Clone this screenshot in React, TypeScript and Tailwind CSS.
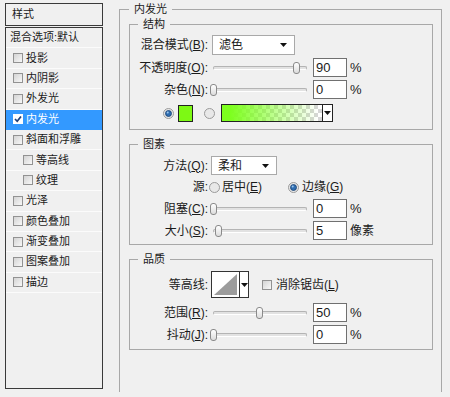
import React from "react";

type Effect = { label: string; checked?: boolean; active?: boolean; sub?: boolean };

const effects: Effect[] = [
  { label: "投影" },
  { label: "内阴影" },
  { label: "外发光" },
  { label: "内发光", checked: true, active: true },
  { label: "斜面和浮雕" },
  { label: "等高线", sub: true },
  { label: "纹理", sub: true },
  { label: "光泽" },
  { label: "颜色叠加" },
  { label: "渐变叠加" },
  { label: "图案叠加" },
  { label: "描边" },
];

function Check({ checked = false }: { checked?: boolean }) {
  if (checked) {
    return (
      <span className="flex h-[10px] w-[10px] shrink-0 items-center justify-center border border-white bg-white">
        <svg width="8" height="8" viewBox="0 0 8 8">
          <path d="M1 4 L3.2 6.3 L7 1.4" fill="none" stroke="#1f3f78" strokeWidth="1.7" />
        </svg>
      </span>
    );
  }
  return <span className="block h-[10px] w-[10px] shrink-0 border border-[#929292] bg-gradient-to-br from-[#d4d4d4] to-[#f8f8f8]" />;
}

function Radio({ on = false }: { on?: boolean }) {
  return (
    <svg width="11" height="11" viewBox="0 0 11 11" className="shrink-0">
      <circle cx="5.5" cy="5.5" r="5" fill="#e8e8e8" stroke="#9a9a9a" />
      {on && (
        <>
          <circle cx="5.5" cy="5.5" r="3" fill="#2f6db0" stroke="#173f6e" strokeWidth="0.8" />
          <circle cx="4.7" cy="4.6" r="1" fill="#9cc7ef" />
        </>
      )}
    </svg>
  );
}

function Arrow() {
  return (
    <svg width="7" height="4" viewBox="0 0 7 4" className="shrink-0">
      <path d="M0 0H7L3.5 4Z" fill="#111" />
    </svg>
  );
}

function Select({ value, className }: { value: string; className: string }) {
  return (
    <div className={`flex items-center justify-between border border-[#a9a9a9] bg-white pl-[6px] pr-[7px] ${className}`}>
      <span>{value}</span>
      <Arrow />
    </div>
  );
}

function Slider({ pos }: { pos: number }) {
  return (
    <div className="relative ml-[2px] h-[14px] w-[97px]">
      <div className="absolute left-[3px] right-0 top-[5px] h-[4px] rounded-[2px] border border-[#b4b4b4] border-b-white bg-[#e2e2e2]" />
      <div
        className="absolute top-[1px] h-[12px] w-[7px] rounded-[3px] border border-[#8a8a8a] bg-gradient-to-b from-white to-[#dcdcdc]"
        style={{ left: pos }}
      />
    </div>
  );
}

function Num({ v, unit = "%" }: { v: string; unit?: string }) {
  return (
    <div className="ml-[6px] flex items-center">
      <div className="h-[19px] w-[34px] border border-[#707070] bg-white pl-[2px] text-[13px] leading-[17px]">{v}</div>
      <span className={unit === "%" ? "ml-[3px] text-[13px]" : "ml-[3px]"}>{unit}</span>
    </div>
  );
}

function Label({ children }: { children: React.ReactNode }) {
  return <div className="w-[78px] shrink-0 text-right">{children}</div>;
}

function SliderRow({ label, pos, v, unit, className }: { label: React.ReactNode; pos: number; v: string; unit?: string; className: string }) {
  return (
    <div className={`flex h-[19px] items-center ${className}`}>
      <Label>{label}</Label>
      <Slider pos={pos} />
      <Num v={v} unit={unit} />
    </div>
  );
}

function Group({ title, className, children }: { title: string; className: string; children: React.ReactNode }) {
  return (
    <fieldset className={`border border-[#a8a8a8] px-0 ${className}`}>
      <legend className="ml-[8px] px-[5px] text-[11px] leading-[14px]">{title}</legend>
      {children}
    </fieldset>
  );
}

export default function App() {
  return (
    <div className="flex h-[397px] w-[450px] items-start overflow-hidden bg-[#f0f0f0] font-['Liberation_Sans','Noto_Sans_CJK_SC',sans-serif] text-[12px] leading-none text-[#1b1b1b]">
      {/* left list */}
      <div className="ml-[5px] mt-[3px] flex w-[98px] flex-col text-[11px]">
        <div className="flex h-[23px] items-center border border-[#3a3a3a] pl-[6px]">样式</div>
        <div className="mt-[1px] h-[362px] border border-[#3a3a3a]">
          <div className="flex h-[20.4px] items-center border-b border-[#fbfbfb] pl-[4px]">混合选项:默认</div>
          {effects.map((e, i) => (
            <div
              key={i}
              className={`flex h-[20.4px] items-center gap-[3px] border-b ${
                e.active ? "border-[#3399ff] bg-[#3399ff] text-white" : "border-[#fbfbfb]"
              } ${e.sub ? "pl-[17px]" : "pl-[7px]"}`}
            >
              <Check checked={e.checked} />
              <span>{e.label}</span>
            </div>
          ))}
        </div>
      </div>

      {/* main panel */}
      <fieldset className="ml-[16px] mt-[2px] h-[390px] w-[323px] border border-b-0 border-[#a8a8a8] pl-[9px] pr-[8px]">
        <legend className="px-[5px] text-[11px] leading-[14px]">内发光</legend>

        <Group title="结构" className="mt-[1px] pb-[7px]">
          <div className="mt-[4px] flex h-[20px] items-center">
            <Label>
              混合模式(<u>B</u>):
            </Label>
            <Select value="滤色" className="ml-[4px] h-[20px] w-[83px]" />
          </div>
          <SliderRow label={<>不透明度(<u>O</u>):</>} pos={83} v="90" className="mt-[3px]" />
          <SliderRow label={<>杂色(<u>N</u>):</>} pos={0} v="0" className="mt-[3px]" />
          <div className="mt-[5px] flex h-[18px] items-center pl-[33px]">
            <Radio on />
            <div className="ml-[4px] h-[17px] w-[15px] border border-[#222] bg-[#7df914]" />
            <div className="ml-[11px]">
              <Radio />
            </div>
            <div className="ml-[6px] flex h-[18px] w-[112px] border border-[#222]">
              <div className="h-full flex-1 bg-[image:repeating-conic-gradient(#d6d6d6_0_25%,#ffffff_0_50%)] bg-[length:8px_8px]">
                <div className="h-full w-full bg-[image:linear-gradient(to_right,#7dff1e_8%,rgba(125,255,30,0)_96%)]" />
              </div>
              <div className="flex w-[10px] items-center justify-center border-l border-[#222] bg-white">
                <Arrow />
              </div>
            </div>
          </div>
        </Group>

        <Group title="图素" className="mt-[7px] pb-[4px]">
          <div className="mt-[5px] flex h-[19px] items-center">
            <Label>
              方法(<u>Q</u>):
            </Label>
            <Select value="柔和" className="ml-[3px] h-[19px] w-[66px]" />
          </div>
          <div className="mt-[3px] flex h-[18px] items-center">
            <Label>源:</Label>
            <div className="ml-[1px]">
              <Radio />
            </div>
            <span className="ml-[2px]">
              居中(<u>E</u>)
            </span>
            <div className="ml-[26px]">
              <Radio on />
            </div>
            <span className="ml-[3px]">
              边缘(<u>G</u>)
            </span>
          </div>
          <SliderRow label={<>阻塞(<u>C</u>):</>} pos={0} v="0" className="mt-[3px]" />
          <SliderRow label={<>大小(<u>S</u>):</>} pos={5} v="5" unit="像素" className="mt-[3px]" />
        </Group>

        <Group title="品质" className="mt-[7px] pb-[5px]">
          <div className="mt-[5px] flex h-[27px] items-center">
            <Label>等高线:</Label>
            <div className="ml-[3px] flex h-[27px] w-[38px] border border-[#333] bg-white">
              <svg width="27" height="25" viewBox="0 0 27 25" className="shrink-0">
                <path d="M2 23 L25 2 L25 23 Z" fill="#9c9c9c" />
              </svg>
              <div className="flex flex-1 items-center justify-center border-l border-[#333]">
                <Arrow />
              </div>
            </div>
            <div className="ml-[13px]">
              <Check />
            </div>
            <span className="ml-[4px]">
              消除锯齿(<u>L</u>)
            </span>
          </div>
          <SliderRow label={<>范围(<u>R</u>):</>} pos={46} v="50" className="mt-[5px]" />
          <SliderRow label={<>抖动(<u>J</u>):</>} pos={0} v="0" className="mt-[3px]" />
        </Group>
      </fieldset>
    </div>
  );
}
